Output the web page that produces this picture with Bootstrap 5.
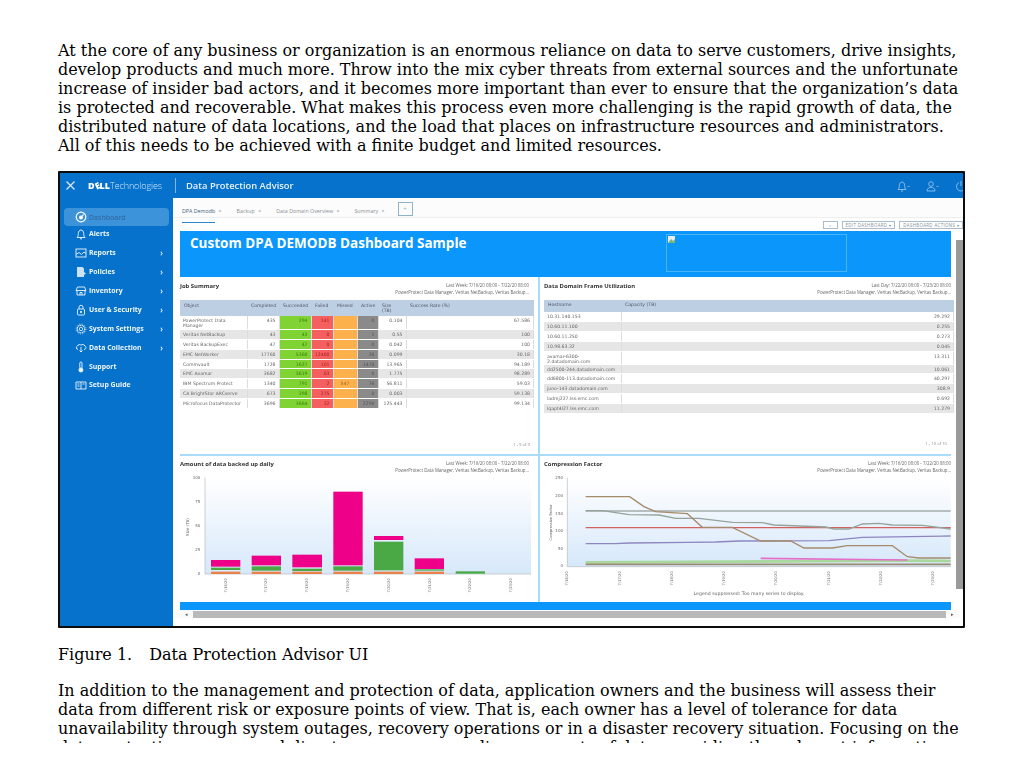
<!DOCTYPE html>
<html lang="en">
<head>
  <meta charset="UTF-8" />
  <title>Data Protection Advisor</title>
  <link rel="stylesheet" href="https://cdn.jsdelivr.net/npm/bootstrap@5.3.0/dist/css/bootstrap.min.css" />
  <style>
    body { background: #fff; color: #000; font-family: "DejaVu Serif", serif; font-size: 15.99px; line-height: 19px; }
    .doc-clip { height: 743px; overflow: hidden; padding: 41px 59px 0 58px; }
    .doc-text { margin: 0 0 17px; }
    .doc-lead { margin-bottom: 16px; }
    .fig-num { margin-right: 17px; }

    .shot { width: 907px; height: 457px; border: 2px solid #0b0b0b; border-radius: 1px; overflow: hidden; margin-bottom: 17px; font-family: "Open Sans", sans-serif; background: #f8f6f3; }
    .shot-inner { filter: blur(.45px); }
    .top-bar { height: 25px; background: #0672cb; color: #e6f2fb; }
    .close-x { width: 20px; margin-right: 8px; }
    .dell-logo { width: 87px; font-size: 9px; white-space: nowrap; color: #fff; }
    .dell-logo b { font-weight: 800; }
    .dell-e { display: inline-block; font-style: normal; transform: rotate(-25deg); }
    .dell-logo span { font-weight: 300; color: #cfe6f8; letter-spacing: -.1px; }
    .bar-title { border-left: 1px solid #7fb8e6; height: 15px; line-height: 15px; padding-left: 10px; font-size: 9.4px; font-weight: 600; }
    .top-icons { width: 70px; gap: 16px; margin-right: -4px; }

    .shot-body { height: 428px; }
    .side-nav { width: 113px; background: #0672cb; padding: 10px 4px 0 4px; flex: none; }
    .side-item { height: 19px; color: #eef6fc; font-size: 6.9px; font-weight: 700; padding: 0 6px 0 11px; white-space: nowrap; }
    .side-item svg { width: 12px; height: 12px; margin-right: 2px; flex: none; }
    .side-item.is-on { height: 18px; margin-bottom: -2px; background: #3d93da; color: #2f6ea8; border-radius: 4px; font-weight: 600; }
    .side-item.is-last { margin-top: -1px; }
    .side-item .chev { margin-left: auto; font-size: 8px; font-weight: 600; }

    .main-col { width: 790px; background: #fff; overflow: hidden; }
    .tab-row { height: 20px; padding: 4px 0 0 9px; font-size: 5.3px; color: #8a8f94; border-bottom: 1px solid #eceeef; background: #fcfcfc; }
    .tab-item { margin-right: 15px; white-space: nowrap; }
    .tab-name { display: inline-block; padding-bottom: 1px; }
    .tab-item.is-on .tab-name { color: #45627c; border-bottom: 1px solid #2a88c8; }
    .tab-x { margin-left: 2px; }
    .tab-plus { width: 15px; height: 14px; border: 1px solid #8fb3cc; color: #8fb3cc; font-size: 6px; margin-left: -2px; }
    .tool-row { height: 13px; gap: 4px; font-size: 4.4px; letter-spacing: .35px; color: #7f8c98; background: #fff; }
    .tool-btn { height: 8px; border: 1px solid #a9bccb; padding: 0 3px; white-space: nowrap; line-height: 6px; }
    .tool-mini { width: 15px; text-align: center; padding: 0; }

    .work-area { padding-left: 7px; height: 379px; }
    .work-col { width: 771px; flex: none; }
    .v-track { width: 12px; flex: none; padding: 9px 0 21px 5px; }
    .v-thumb { background: #9a9a9a; width: 7px; height: 100%; }

    .banner { height: 46px; background: #0a96fa; padding: 3px 0 0 10px; color: #fff; }
    .banner h1 { font-family: "Open Sans", sans-serif; font-size: 13.5px; font-weight: 700; margin: 0; width: 476px; line-height: 18px; white-space: nowrap; }
    .logo-slot { width: 181px; height: 38px; border: 1px solid #49b2fb; }
    .logo-slot svg { display: block; margin: 1px 0 0 1px; }

    .dash-row { display: flex; }
    .row-one { height: 179px; border-bottom: 2px solid #a9dcfb; }
    .row-two { height: 146px; }
    .pane-a { width: 360px; border-right: 2px solid #a9dcfb; flex: none; }
    .pane-b { width: 411px; flex: none; padding-left: 4px; }
    .pane-head { height: 23px; padding: 5px 9px 0 0; }
    .pane-b .pane-head { padding-right: 0; }
    .pane-title { font-size: 5.9px; font-weight: 700; color: #333; line-height: 8px; white-space: nowrap; }
    .pane-meta { font-size: 4.4px; line-height: 7px; color: #666; text-align: right; white-space: nowrap; }
    .pane-foot { font-size: 4.2px; color: #8b8b8b; text-align: right; padding: 26px 8px 0 0; }
    .pane-b .pane-foot { padding-top: 20px; padding-right: 4px; }
    .row-two .pane-head { height: 19px; padding-top: 4px; }
    .chart { display: block; }
    .chart text { font-family: "DejaVu Sans", sans-serif; fill: #666; }

    .dpa-tbl { width: 354px; table-layout: fixed; margin: 0; font-family: "DejaVu Sans", sans-serif; font-size: 4.6px; line-height: 5px; color: #666; border-collapse: collapse; }
    .dpa-tbl th, .dpa-tbl td { padding: 2px 3px 0; height: 9.8px; border: 0; border-right: 1px solid #dcdcdc; border-bottom: 1px solid #fff; font-weight: 400; color: #666; vertical-align: top; background: #fff; }
    .dpa-tbl thead th { background: #bccfe3; height: 15.5px; padding: 3px 4px 0; border: 0; color: #556; }
    .dpa-tbl tbody tr:nth-child(even) td { background: #e6e6e6; }
    .dpa-tbl .num { text-align: right; }
    .dpa-tbl tbody tr td.c-ok { background: #7fd332; color: #3e7a10; }
    .dpa-tbl tbody tr td.c-bad { background: #f4605f; color: #a52020; }
    .dpa-tbl tbody tr td.c-mix { background: #fdb14d; color: #94601a; text-align: center; }
    .dpa-tbl tbody tr td.c-act { background: #8a8a8a; color: #555; }
    .job-tbl tbody tr:first-child td { height: 14.3px; }
    .job-tbl .w-a { width: 67px; } .job-tbl .w-b { width: 32px; } .job-tbl .w-c { width: 32px; } .job-tbl .w-d { width: 22px; }
    .job-tbl .w-e { width: 24px; } .job-tbl .w-f { width: 21px; } .job-tbl .w-g { width: 28px; }
    .dpa-tbl.frame-tbl { width: 410px; }
    .frame-tbl .w-a { width: 77px; }
    .dpa-tbl.frame-tbl thead th { height: 11.5px; padding-top: 2px; }
    .frame-tbl th, .frame-tbl td { height: 9.9px; }

    .blue-strip { height: 8px; background: #0a96fa; width: 771px; }
    .h-scroll { height: 8px; padding-left: 7px; font-size: 5px; color: #555; width: 786px; background: #fafafa; }
    .h-arrow { width: 13px; text-align: center; }
    .h-thumb { flex: 1; height: 7px; background: #b9b9b9; }
  </style>
</head>
<body>
  <svg width="0" height="0" class="d-block">
    <defs>
      <g id="ic-gauge" fill="none" stroke="currentColor" stroke-width="1.2"><circle cx="6" cy="6" r="4.8"/><circle cx="6" cy="6.5" r="1.3" fill="currentColor"/><path d="M6.5 6 8.5 3.5"/></g>
      <g id="ic-bell" fill="none" stroke="currentColor" stroke-width=".9"><path d="M2 9.500c1-1 1.300-2 1.300-4C3.300 3.500 4.500 2 6 2s2.700 1.500 2.700 3.500c0 2 .3 3 1.300 4z"/><path d="M5 10.800h2"/></g>
      <g id="ic-report" fill="none" stroke="currentColor" stroke-width=".9"><rect x="1" y="2" width="10" height="8"/><path d="M1 7.500 4 5.500 6.500 7.500 9 5 11 6.500"/></g>
      <g id="ic-policy" fill="currentColor"><path d="M2 1h5.500L9 2.500V6l2 1.500L9 9v2H2z" opacity=".85"/></g>
      <g id="ic-store" fill="none" stroke="currentColor" stroke-width=".9"><path d="M2.500 2h7L11 5.500H1zM2 5.500V10h8V5.500M5 10V7.500h2V10"/></g>
      <g id="ic-lock" fill="none" stroke="currentColor" stroke-width=".9"><rect x="2.500" y="5" width="7" height="6" rx=".8"/><path d="M4 5V3.300a2 2 0 0 1 4 0V5"/><circle cx="6" cy="8" r=".7" fill="currentColor"/></g>
      <g id="ic-gear" fill="none" stroke="currentColor"><circle cx="6" cy="6" r="3.800" stroke-width="1.100" stroke-dasharray="1.300 .5"/><circle cx="6" cy="6" r="1.700" stroke-width=".8"/><circle cx="6" cy="6" r="5" stroke-width=".6" stroke-dasharray="1.200 1.400"/></g>
      <g id="ic-cloud" fill="none" stroke="currentColor" stroke-width=".9"><path d="M3 7.500C1 7.500.8 4.500 2.500 4 3 2.300 5.300 2 6 3.300 7 2 9.500 2.300 9.800 4c1.800.4 1.500 3.500-.8 3.500"/><path d="M6 5v5M4.500 8.500 6 10l1.500-1.500"/></g>
      <g id="ic-support" fill="none" stroke="currentColor" stroke-width=".9"><rect x="4.800" y="1" width="2.200" height="6.500" rx="1.100"/><circle cx="5.900" cy="9" r="2" fill="currentColor"/></g>
      <g id="ic-guide" fill="none" stroke="currentColor" stroke-width=".9"><path d="M1 3h10v7H1zM6 3v7M2.500 5h2M2.500 7h2M7.500 5h2"/></g>
    </defs>
  </svg>

  <div class="doc-clip">
    <p class="doc-text doc-lead">At the core of any business or organization is an enormous reliance on data to serve customers, drive insights, develop products and much more. Throw into the mix cyber threats from external sources and the unfortunate increase of insider bad actors, and it becomes more important than ever to ensure that the organization’s data is protected and recoverable. What makes this process even more challenging is the rapid growth of data, the distributed nature of data locations, and the load that places on infrastructure resources and administrators. All of this needs to be achieved with a finite budget and limited resources.</p>

    <figure class="shot">
      <div class="shot-inner">
        <div class="top-bar d-flex align-items-center">
          <div class="close-x d-flex justify-content-center">
            <svg width="11" height="11" viewBox="0 0 11 11"><path d="M1.500 1.500 9.500 9.500M9.500 1.500 1.500 9.500" stroke="#dcecf9" stroke-width="1.200"/></svg>
          </div>
          <div class="dell-logo"><b>D<i class="dell-e">E</i>LL</b><span>Technologies</span></div>
          <div class="bar-title">Data Protection Advisor</div>
          <div class="top-icons d-flex align-items-center ms-auto">
            <svg width="13" height="12" viewBox="0 0 13 12"><path d="M1 9.500c1-1 1.300-2 1.300-4C2.300 3.500 3.500 2 5 2s2.700 1.500 2.700 3.500c0 2 .3 3 1.300 4zM4 11h2M10.500 6l1 1 1-1" fill="none" stroke="#8fc4ec" stroke-width=".9"/></svg>
            <svg width="13" height="12" viewBox="0 0 13 12"><circle cx="5" cy="4" r="2.300" fill="none" stroke="#8fc4ec" stroke-width=".9"/><path d="M1 11c0-5 8-5 8 0zM10.500 6l1 1 1-1" fill="none" stroke="#8fc4ec" stroke-width=".9"/></svg>
            <svg width="12" height="12" viewBox="0 0 12 12"><path d="M4 2.500a4.500 4.500 0 1 0 4 0M6 1v5" fill="none" stroke="#8fc4ec" stroke-width=".9"/></svg>
          </div>
        </div>

        <div class="shot-body d-flex">
          <nav class="side-nav">
            <div class="side-item is-on d-flex align-items-center"><svg viewBox="0 0 12 12" class="text-white"><use href="#ic-gauge"/></svg>Dashboard</div>
            <div class="side-item d-flex align-items-center"><svg viewBox="0 0 12 12"><use href="#ic-bell"/></svg>Alerts</div>
            <div class="side-item d-flex align-items-center"><svg viewBox="0 0 12 12"><use href="#ic-report"/></svg>Reports<span class="chev">›</span></div>
            <div class="side-item d-flex align-items-center"><svg viewBox="0 0 12 12"><use href="#ic-policy"/></svg>Policies<span class="chev">›</span></div>
            <div class="side-item d-flex align-items-center"><svg viewBox="0 0 12 12"><use href="#ic-store"/></svg>Inventory<span class="chev">›</span></div>
            <div class="side-item d-flex align-items-center"><svg viewBox="0 0 12 12"><use href="#ic-lock"/></svg>User &amp; Security<span class="chev">›</span></div>
            <div class="side-item d-flex align-items-center"><svg viewBox="0 0 12 12"><use href="#ic-gear"/></svg>System Settings<span class="chev">›</span></div>
            <div class="side-item d-flex align-items-center"><svg viewBox="0 0 12 12"><use href="#ic-cloud"/></svg>Data Collection<span class="chev">›</span></div>
            <div class="side-item d-flex align-items-center"><svg viewBox="0 0 12 12"><use href="#ic-support"/></svg>Support</div>
            <div class="side-item is-last d-flex align-items-center"><svg viewBox="0 0 12 12"><use href="#ic-guide"/></svg>Setup Guide</div>
          </nav>

          <div class="main-col">
            <div class="tab-row d-flex align-items-start">
              <span class="tab-item is-on"><span class="tab-name">DPA Demodb</span> <span class="tab-x">×</span></span>
              <span class="tab-item"><span class="tab-name">Backup</span> <span class="tab-x">×</span></span>
              <span class="tab-item"><span class="tab-name">Data Domain Overview</span> <span class="tab-x">×</span></span>
              <span class="tab-item"><span class="tab-name">Summary</span> <span class="tab-x">×</span></span>
              <span class="tab-plus d-flex align-items-center justify-content-center">+</span>
            </div>
            <div class="tool-row d-flex align-items-center justify-content-end">
              <span class="tool-btn tool-mini">⌕</span>
              <span class="tool-btn">EDIT DASHBOARD ▾</span>
              <span class="tool-btn">DASHBOARD ACTIONS ▾</span>
            </div>

            <div class="work-area d-flex">
              <div class="work-col">
                <div class="banner d-flex">
                  <h1>Custom DPA DEMODB Dashboard Sample</h1>
                  <div class="logo-slot">
                    <svg width="7" height="7" viewBox="0 0 7 7"><rect width="7" height="7" fill="#e8eef2"/><path d="M0 7 3 3l2 2 2-2v4z" fill="#7fb27f"/></svg>
                  </div>
                </div>

                <div class="dash-row row-one">
                  <section class="pane-a">
                    <div class="pane-head d-flex justify-content-between">
                      <div class="pane-title">Job Summary</div>
                      <div class="pane-meta">Last Week: 7/16/20 08:00 - 7/22/20 08:00<br />PowerProtect Data Manager, Veritas NetBackup, Veritas Backup...</div>
                    </div>
                    <table class="table dpa-tbl job-tbl">
                      <thead>
                        <tr>
                          <th class="w-a">Object</th><th class="w-b">Completed</th><th class="w-c">Succeeded</th><th class="w-d">Failed</th><th class="w-e">Missed</th><th class="w-f">Active</th><th class="w-g">Size<br />(TB)</th><th>Success Rate (%)</th>
                        </tr>
                      </thead>
                      <tbody>
                        <tr><td>PowerProtect Data<br />Manager</td><td class="num">435</td><td class="num c-ok">294</td><td class="num c-bad">141</td><td class="c-mix"></td><td class="num c-act">0</td><td class="num">0.104</td><td class="num">67.586</td></tr>
                        <tr><td>Veritas NetBackup</td><td class="num">43</td><td class="num c-ok">43</td><td class="num c-bad">0</td><td class="c-mix"></td><td class="num c-act">1</td><td class="num">0.55</td><td class="num">100</td></tr>
                        <tr><td>Veritas BackupExec</td><td class="num">47</td><td class="num c-ok">47</td><td class="num c-bad">0</td><td class="c-mix"></td><td class="num c-act">0</td><td class="num">0.042</td><td class="num">100</td></tr>
                        <tr><td>EMC NetWorker</td><td class="num">17760</td><td class="num c-ok">5360</td><td class="num c-bad">12400</td><td class="c-mix"></td><td class="num c-act">26</td><td class="num">0.099</td><td class="num">30.18</td></tr>
                        <tr><td>Commvault</td><td class="num">1728</td><td class="num c-ok">1627</td><td class="num c-bad">101</td><td class="c-mix"></td><td class="num c-act">1470</td><td class="num">13.965</td><td class="num">94.189</td></tr>
                        <tr><td>EMC Avamar</td><td class="num">3682</td><td class="num c-ok">3619</td><td class="num c-bad">63</td><td class="c-mix"></td><td class="num c-act">0</td><td class="num">1.775</td><td class="num">98.289</td></tr>
                        <tr><td>IBM Spectrum Protect</td><td class="num">1340</td><td class="num c-ok">791</td><td class="num c-bad">2</td><td class="c-mix">547</td><td class="num c-act">76</td><td class="num">56.811</td><td class="num">59.03</td></tr>
                        <tr><td>CA BrightStor ARCserve</td><td class="num">673</td><td class="num c-ok">398</td><td class="num c-bad">275</td><td class="c-mix"></td><td class="num c-act">0</td><td class="num">0.003</td><td class="num">59.138</td></tr>
                        <tr><td>Microfocus DataProtector</td><td class="num">3696</td><td class="num c-ok">3664</td><td class="num c-bad">32</td><td class="c-mix"></td><td class="num c-act">2290</td><td class="num">125.443</td><td class="num">99.134</td></tr>
                      </tbody>
                    </table>
                    <div class="pane-foot">1 - 9 of 9</div>
                  </section>
                  <section class="pane-b">
                    <div class="pane-head d-flex justify-content-between">
                      <div class="pane-title">Data Domain Frame Utilization</div>
                      <div class="pane-meta">Last Day: 7/22/20 08:00 - 7/23/20 08:00<br />PowerProtect Data Manager, Veritas NetBackup, Veritas Backup...</div>
                    </div>
                    <table class="table dpa-tbl frame-tbl">
                      <thead><tr><th class="w-a">Hostname</th><th>Capacity (TB)</th></tr></thead>
                      <tbody>
                        <tr><td>10.31.140.153</td><td class="num">29.292</td></tr>
                        <tr><td>10.60.11.100</td><td class="num">0.255</td></tr>
                        <tr><td>10.60.11.250</td><td class="num">0.273</td></tr>
                        <tr><td>10.98.63.32</td><td class="num">0.045</td></tr>
                        <tr><td>avamar-6300-<br />2.datadomain.com</td><td class="num">13.311</td></tr>
                        <tr><td>dd2500-244.datadomain.com</td><td class="num">10.061</td></tr>
                        <tr><td>dd6800-113.datadomain.com</td><td class="num">40.297</td></tr>
                        <tr><td>juno-143.datadomain.com</td><td class="num">308.9</td></tr>
                        <tr><td>ladmj227.lss.emc.com</td><td class="num">0.692</td></tr>
                        <tr><td>lqapt4l27.lss.emc.com</td><td class="num">11.279</td></tr>
                      </tbody>
                    </table>
                    <div class="pane-foot">1 - 10 of 10</div>
                  </section>
                </div>

                <div class="dash-row row-two">
                  <section class="pane-a">
                    <div class="pane-head d-flex justify-content-between">
                      <div class="pane-title">Amount of data backed up daily</div>
                      <div class="pane-meta">Last Week: 7/16/20 08:00 - 7/22/20 08:00<br />PowerProtect Data Manager, Veritas NetBackup, Veritas Backup...</div>
                    </div>
                    <svg class="chart" width="358" height="126" viewBox="15 60 1074 378">
                      <defs><linearGradient id="sky" x1="0" y1="0" x2="0" y2="1"><stop offset="0" stop-color="#fff"/><stop offset="1" stop-color="#d6e8fa"/></linearGradient></defs>
                      <rect x="90" y="68" width="978" height="289" fill="url(#sky)"/>
                      <path d="M90 68V357H1068" fill="none" stroke="#b5b9bd" stroke-width="2"/>
                      <g font-size="12" text-anchor="end">
                        <text x="76" y="72">100</text><text x="76" y="144">75</text><text x="76" y="216">50</text><text x="76" y="288">25</text><text x="76" y="361">0</text>
                      </g>
                      <text font-size="12" text-anchor="middle" transform="translate(41 216) rotate(-90)">Size (TB)</text>
                      <g fill="#ee0088">
                        <rect x="108" y="315" width="88" height="20"/><rect x="230" y="302" width="88" height="29"/><rect x="352" y="299" width="89" height="38"/>
                        <rect x="475" y="110" width="88" height="221"/><rect x="597" y="243" width="88" height="12"/><rect x="719" y="310" width="88" height="32"/>
                      </g>
                      <g fill="#4aa845">
                        <rect x="108" y="338" width="88" height="7"/><rect x="230" y="334" width="88" height="13"/><rect x="352" y="341" width="89" height="7"/>
                        <rect x="475" y="334" width="88" height="13"/><rect x="597" y="260" width="88" height="86"/><rect x="719" y="343" width="88" height="4"/><rect x="842" y="349" width="88" height="7"/>
                      </g>
                      <g fill="#e8824a">
                        <rect x="108" y="350" width="88" height="7"/><rect x="230" y="350" width="88" height="7"/><rect x="352" y="350" width="89" height="7"/>
                        <rect x="475" y="350" width="88" height="7"/><rect x="597" y="350" width="88" height="7"/><rect x="719" y="350" width="88" height="7"/>
                      </g>
                      <g font-size="11" text-anchor="middle">
                        <text transform="translate(155 391) rotate(-90)">7/16/20</text><text transform="translate(277 391) rotate(-90)">7/17/20</text>
                        <text transform="translate(400 391) rotate(-90)">7/18/20</text><text transform="translate(522 391) rotate(-90)">7/19/20</text>
                        <text transform="translate(645 391) rotate(-90)">7/20/20</text><text transform="translate(767 391) rotate(-90)">7/21/20</text>
                        <text transform="translate(889 391) rotate(-90)">7/22/20</text><text transform="translate(1011 391) rotate(-90)">7/23/20</text>
                      </g>
                    </svg>
                  </section>
                  <section class="pane-b">
                    <div class="pane-head d-flex justify-content-between">
                      <div class="pane-title">Compression Factor</div>
                      <div class="pane-meta">Last Week: 7/16/20 08:00 - 7/22/20 08:00<br />PowerProtect Data Manager, Veritas NetBackup, Veritas Backup...</div>
                    </div>
                    <svg class="chart" width="407" height="126" viewBox="15 60 1221 378">
                      <rect x="85" y="68" width="1150" height="267" fill="url(#sky)"/>
                      <path d="M85 68V335H1235" fill="none" stroke="#b5b9bd" stroke-width="2"/>
                      <g font-size="12" text-anchor="end">
                        <text x="72" y="72">250</text><text x="72" y="126">200</text><text x="72" y="179">150</text><text x="72" y="232">100</text><text x="72" y="286">50</text><text x="72" y="337">0</text>
                      </g>
                      <text font-size="11" text-anchor="middle" transform="translate(38 202) rotate(-90)">Compression Factor</text>
                      <g fill="none" stroke-width="4">
                        <polyline stroke="#a9d79c" stroke-width="8" points="140,322 1105,317 1235,318"/>
                        <polyline stroke="#9a8a70" stroke-width="5" points="140,328 1235,328"/>
                        <polyline stroke="#a5ada8" points="140,168 1235,168"/>
                        <polyline stroke="#d2615f" points="140,218 1235,218"/>
                        <polyline stroke="#8d86c0" points="140,266 230,266 270,264 530,261 600,258 870,257 970,247 1235,243"/>
                        <polyline stroke="#e46fc8" stroke-width="5" points="665,310 1105,315"/>
                        <polyline stroke="#95a39c" points="140,167 190,167 270,179 360,180 410,190 480,190 580,202 670,203 705,210 860,216 885,222 930,222 970,207 1020,205 1060,210 1150,211 1235,222"/>
                        <polyline stroke="#a68a6c" points="140,125 272,125 315,155 350,170 445,176 490,217 580,217 665,258 755,258 795,279 880,279 925,272 1060,272 1105,305 1140,309 1235,309"/>
                      </g>
                      <g font-size="11" text-anchor="middle">
                        <text transform="translate(88 370) rotate(-90)">7/16/20</text><text transform="translate(245 370) rotate(-90)">7/17/20</text>
                        <text transform="translate(403 370) rotate(-90)">7/18/20</text><text transform="translate(559 370) rotate(-90)">7/19/20</text>
                        <text transform="translate(715 370) rotate(-90)">7/20/20</text><text transform="translate(873 370) rotate(-90)">7/21/20</text>
                        <text transform="translate(1029 370) rotate(-90)">7/22/20</text><text transform="translate(1185 370) rotate(-90)">7/23/20</text>
                      </g>
                      <text x="630" y="419" font-size="14" text-anchor="middle">Legend suppressed: Too many series to display.</text>
                    </svg>
                  </section>
                </div>
                <div class="blue-strip"></div>
              </div>
              <div class="v-track"><div class="v-thumb"></div></div>
            </div>
            <div class="h-scroll d-flex align-items-center">
              <span class="h-arrow">◂</span><span class="h-thumb"></span><span class="h-arrow">▸</span>
            </div>
          </div>
        </div>
      </div>
    </figure>

    <p class="doc-text"><span class="fig-num">Figure 1.</span>Data Protection Advisor UI</p>

    <p class="doc-text">In addition to the management and protection of data, application owners and the business will assess their data from different risk or exposure points of view. That is, each owner has a level of tolerance for data unavailability through system outages, recovery operations or in a disaster recovery situation. Focusing on the data protection process and disaster recovery compliance aspects of data, providing the relevant information</p>
  </div>

  <script src="https://cdn.jsdelivr.net/npm/bootstrap@5.3.0/dist/js/bootstrap.bundle.min.js"></script>
</body>
</html>
